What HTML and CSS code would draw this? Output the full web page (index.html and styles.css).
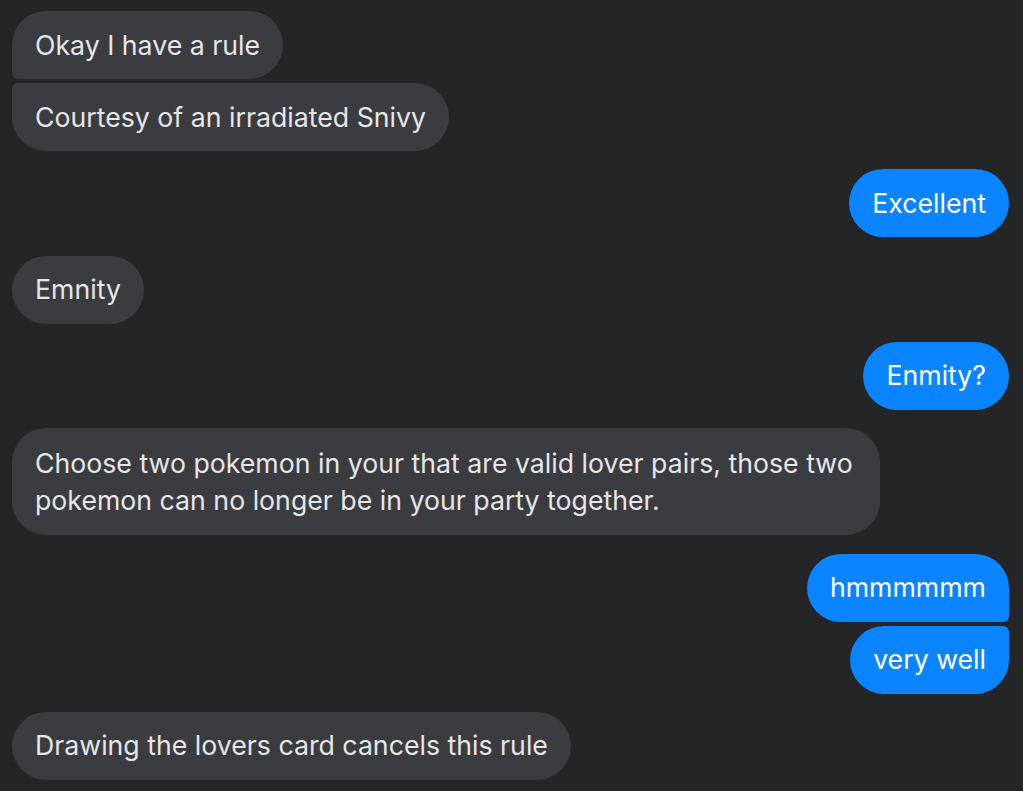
FILE: index.html
```html
<!DOCTYPE html>
<html lang="en">
<head>
<meta charset="utf-8">
<title>Messages</title>
<link rel="stylesheet" href="styles.css">
</head>
<body>
<main class="thread">
  <div class="group in">
    <div class="bubble first">Okay I have a rule</div>
    <div class="bubble last">Courtesy of an irradiated Snivy</div>
  </div>
  <div class="group out">
    <div class="bubble">Excellent</div>
  </div>
  <div class="group in">
    <div class="bubble">Emnity</div>
  </div>
  <div class="group out">
    <div class="bubble">Enmity?</div>
  </div>
  <div class="group in">
    <div class="bubble wide">Choose two pokemon in your that are valid lover pairs, those two pokemon can no longer be in your party together.</div>
  </div>
  <div class="group out">
    <div class="bubble first">hmmmmmm</div>
    <div class="bubble last">very well</div>
  </div>
  <div class="group in">
    <div class="bubble">Drawing the lovers card cancels this rule</div>
  </div>
</main>
</body>
</html>
```
FILE: styles.css
```css
html, body {
  margin: 0;
  padding: 0;
  background: #242527;
}
body {
  font-family: Inter, "Noto Sans", sans-serif;
  font-size: 26.7px;
  -webkit-font-smoothing: antialiased;
}
.thread {
  display: flex;
  flex-direction: column;
  gap: 18.34px;
  padding: 11px 14px 0 12px;
}
.group {
  display: flex;
  flex-direction: column;
  gap: 4px;
}
.group.in { align-items: flex-start; }
.group.out { align-items: flex-end; }
.bubble {
  padding: 15.5px 23px;
  line-height: 37px;
  border-radius: 34px;
  max-width: 822px;
}
.in .bubble {
  background: #3b3c3f;
  color: #e6e6ea;
}
.out .bubble {
  background: #0a84ff;
  color: #ffffff;
}
.in .bubble.first { border-bottom-left-radius: 6px; }
.in .bubble.last { border-top-left-radius: 6px; }
.out .bubble.first { border-bottom-right-radius: 6px; }
.out .bubble.last { border-top-right-radius: 6px; }
.bubble.wide {
  padding-top: 17px;
  padding-bottom: 16px;
}
```
